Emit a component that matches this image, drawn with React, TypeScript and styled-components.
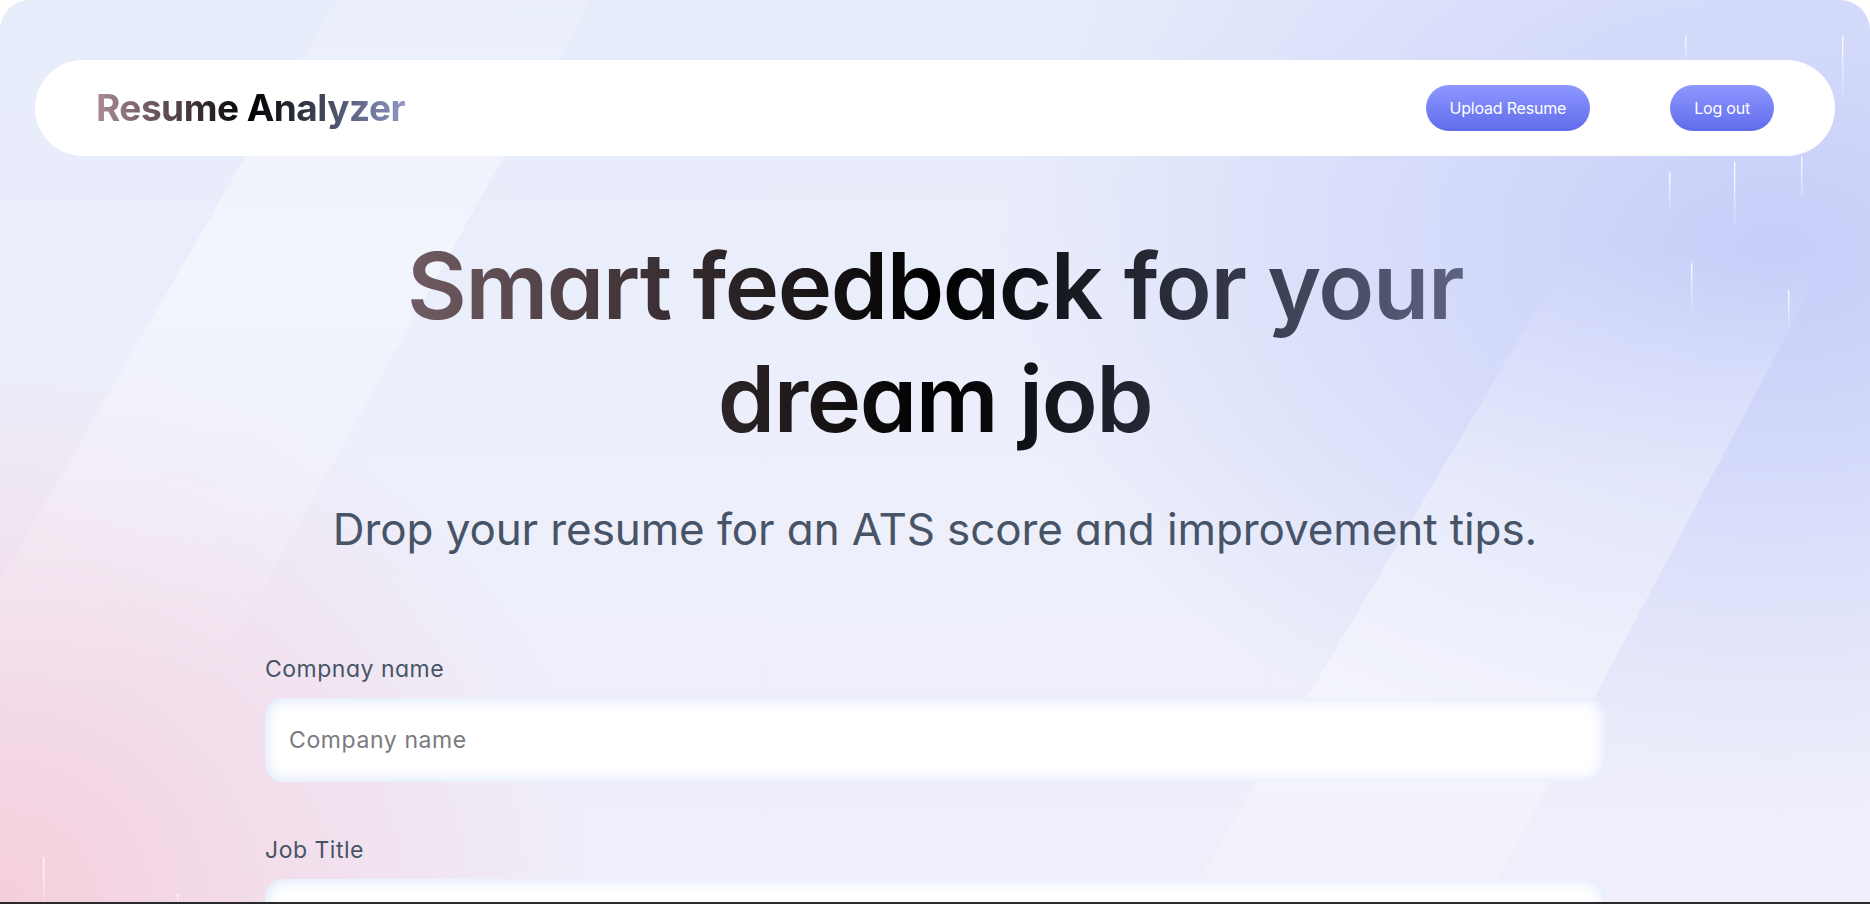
import React from "react";
import styled, { createGlobalStyle } from "styled-components";

const GlobalStyle = createGlobalStyle`
  * { box-sizing: border-box; }
  html, body { margin: 0; padding: 0; background: #ffffff; }
  body {
    font-family: Inter, "Noto Sans", "Liberation Sans", sans-serif;
    font-feature-settings: "cv11";
    -webkit-font-smoothing: antialiased;
  }
`;

const Frame = styled.div`
  height: 100vh;
  overflow: hidden;
  border-bottom: 2px solid #2b2b2d;
`;

const Main = styled.main`
  position: relative;
  height: 100%;
  border-radius: 30px 30px 0 0;
  overflow: hidden;
  background:
    radial-gradient(ellipse 42% 60% at 95% 28%, rgba(196, 204, 249, 0.95) 0%, rgba(196, 204, 249, 0.55) 45%, rgba(196, 204, 249, 0) 100%),
    radial-gradient(ellipse 32% 62% at 0% 100%, rgba(245, 206, 220, 1) 0%, rgba(245, 210, 223, 0.6) 45%, rgba(245, 210, 223, 0) 100%),
    linear-gradient(180deg, #e7ecfb 0%, #edeffb 55%, #efeefa 100%);
`;

const Backdrop = styled.svg`
  position: absolute;
  inset: 0;
  width: 100%;
  height: 100%;
  pointer-events: none;
`;

const Content = styled.div`
  position: relative;
  z-index: 1;
  display: flex;
  flex-direction: column;
  align-items: center;
  padding-top: 60px;
`;

const Navbar = styled.nav`
  width: calc(100% - 70px);
  height: 96px;
  border-radius: 48px;
  background: #ffffff;
  padding: 0 61px;
  display: flex;
  align-items: center;
  justify-content: space-between;
`;

const Logo = styled.span`
  font-size: 37px;
  font-weight: 700;
  letter-spacing: -0.5px;
  background: linear-gradient(to right, #ab8c95, #000000, #8e97c5);
  -webkit-background-clip: text;
  background-clip: text;
  color: transparent;
  line-height: 1.2;
  font-feature-settings: normal;
`;

const NavActions = styled.div`
  display: flex;
  align-items: center;
  gap: 80px;
`;

const PillButton = styled.button`
  height: 46px;
  padding: 0 24px;
  border: none;
  border-radius: 23px;
  background: linear-gradient(to bottom, #8e98ff, #606beb);
  color: #ffffff;
  font-family: inherit;
  font-size: 16px;
  font-weight: 400;
  letter-spacing: -0.2px;
  cursor: pointer;
`;

const Hero = styled.section`
  margin-top: 73px;
  display: flex;
  flex-direction: column;
  align-items: center;
  gap: 45px;
  width: 100%;
`;

const Heading = styled.h1`
  margin: 0;
  width: 1610px;
  text-align: center;
  font-size: 92px;
  line-height: 113px;
  font-weight: 600;
  letter-spacing: -1.4px;
  background: linear-gradient(to right, #ab8c95, #000000, #8e97c5);
  -webkit-background-clip: text;
  background-clip: text;
  color: transparent;
`;

const Subheading = styled.h2`
  margin: 0;
  text-align: center;
  font-size: 44px;
  line-height: 58px;
  font-weight: 400;
  letter-spacing: -0.1px;
  color: #475467;
`;

const Form = styled.form`
  margin-top: 95px;
  width: 1340px;
  display: flex;
  flex-direction: column;
  gap: 52px;
`;

const Field = styled.div`
  display: flex;
  flex-direction: column;
  align-items: flex-start;
  gap: 12px;
`;

const Label = styled.label`
  font-size: 23px;
  line-height: 33px;
  letter-spacing: 0.5px;
  color: #475467;
`;

const Input = styled.input`
  width: 100%;
  height: 84px;
  padding: 0 24px;
  border: none;
  border-radius: 18px;
  background: #ffffff;
  box-shadow: inset 0 0 16px 0 rgba(36, 99, 235, 0.2);
  font-family: inherit;
  font-size: 23px;
  letter-spacing: 0.6px;
  color: #1f2937;
  outline: none;
  &::placeholder {
    color: #7a7a7f;
  }
`;

const streaks: Array<[number, number, number]> = [
  [1685, 36, 60],
  [1842, 36, 95],
  [1734, 162, 225],
  [1801, 157, 196],
  [1669, 173, 210],
  [1691, 264, 311],
  [1788, 291, 326],
  [43, 859, 904],
  [177, 896, 904],
];

function Decor() {
  return (
    <Backdrop viewBox="0 0 1870 904" preserveAspectRatio="none" aria-hidden="true">
      <defs>
        <linearGradient id="bandL" x1="0" y1="0" x2="0" y2="1">
          <stop offset="0" stopColor="#ffffff" stopOpacity="0.12" />
          <stop offset="0.35" stopColor="#ffffff" stopOpacity="0.42" />
          <stop offset="1" stopColor="#ffffff" stopOpacity="0" />
        </linearGradient>
        <linearGradient id="bandR" x1="0" y1="0" x2="0" y2="1">
          <stop offset="0" stopColor="#ffffff" stopOpacity="0" />
          <stop offset="0.35" stopColor="#ffffff" stopOpacity="0.32" />
          <stop offset="0.7" stopColor="#ffffff" stopOpacity="0.36" />
          <stop offset="1" stopColor="#ffffff" stopOpacity="0.18" />
        </linearGradient>
        <linearGradient id="streak" x1="0" y1="0" x2="0" y2="1">
          <stop offset="0" stopColor="#ffffff" stopOpacity="0.95" />
          <stop offset="1" stopColor="#ffffff" stopOpacity="0.2" />
        </linearGradient>
      </defs>
      <polygon points="336,0 591,0 202,700 -68,700" fill="url(#bandL)" />
      <polygon points="1572,250 1832,250 1486,904 1186,904" fill="url(#bandR)" />
      {streaks.map(([x, y1, y2], i) => (
        <rect key={i} x={x} y={y1} width={1.4} height={y2 - y1} fill="url(#streak)" />
      ))}
    </Backdrop>
  );
}

export default function App() {
  return (
    <>
      <GlobalStyle />
      <Frame>
        <Main>
          <Decor />
          <Content>
            <Navbar>
              <Logo>Resume Analyzer</Logo>
              <NavActions>
                <PillButton type="button">Upload Resume</PillButton>
                <PillButton type="button">Log out</PillButton>
              </NavActions>
            </Navbar>
            <Hero>
              <Heading>
                Smart feedback for your
                <br />
                dream job
              </Heading>
              <Subheading>Drop your resume for an ATS score and improvement tips.</Subheading>
            </Hero>
            <Form>
              <Field>
                <Label htmlFor="company-name">Compnay name</Label>
                <Input id="company-name" type="text" placeholder="Company name" />
              </Field>
              <Field>
                <Label htmlFor="job-title">Job Title</Label>
                <Input id="job-title" type="text" placeholder="Job Title" />
              </Field>
              <Field>
                <Label htmlFor="job-description">Job Description</Label>
                <Input id="job-description" type="text" placeholder="Job Description" />
              </Field>
            </Form>
          </Content>
        </Main>
      </Frame>
    </>
  );
}
